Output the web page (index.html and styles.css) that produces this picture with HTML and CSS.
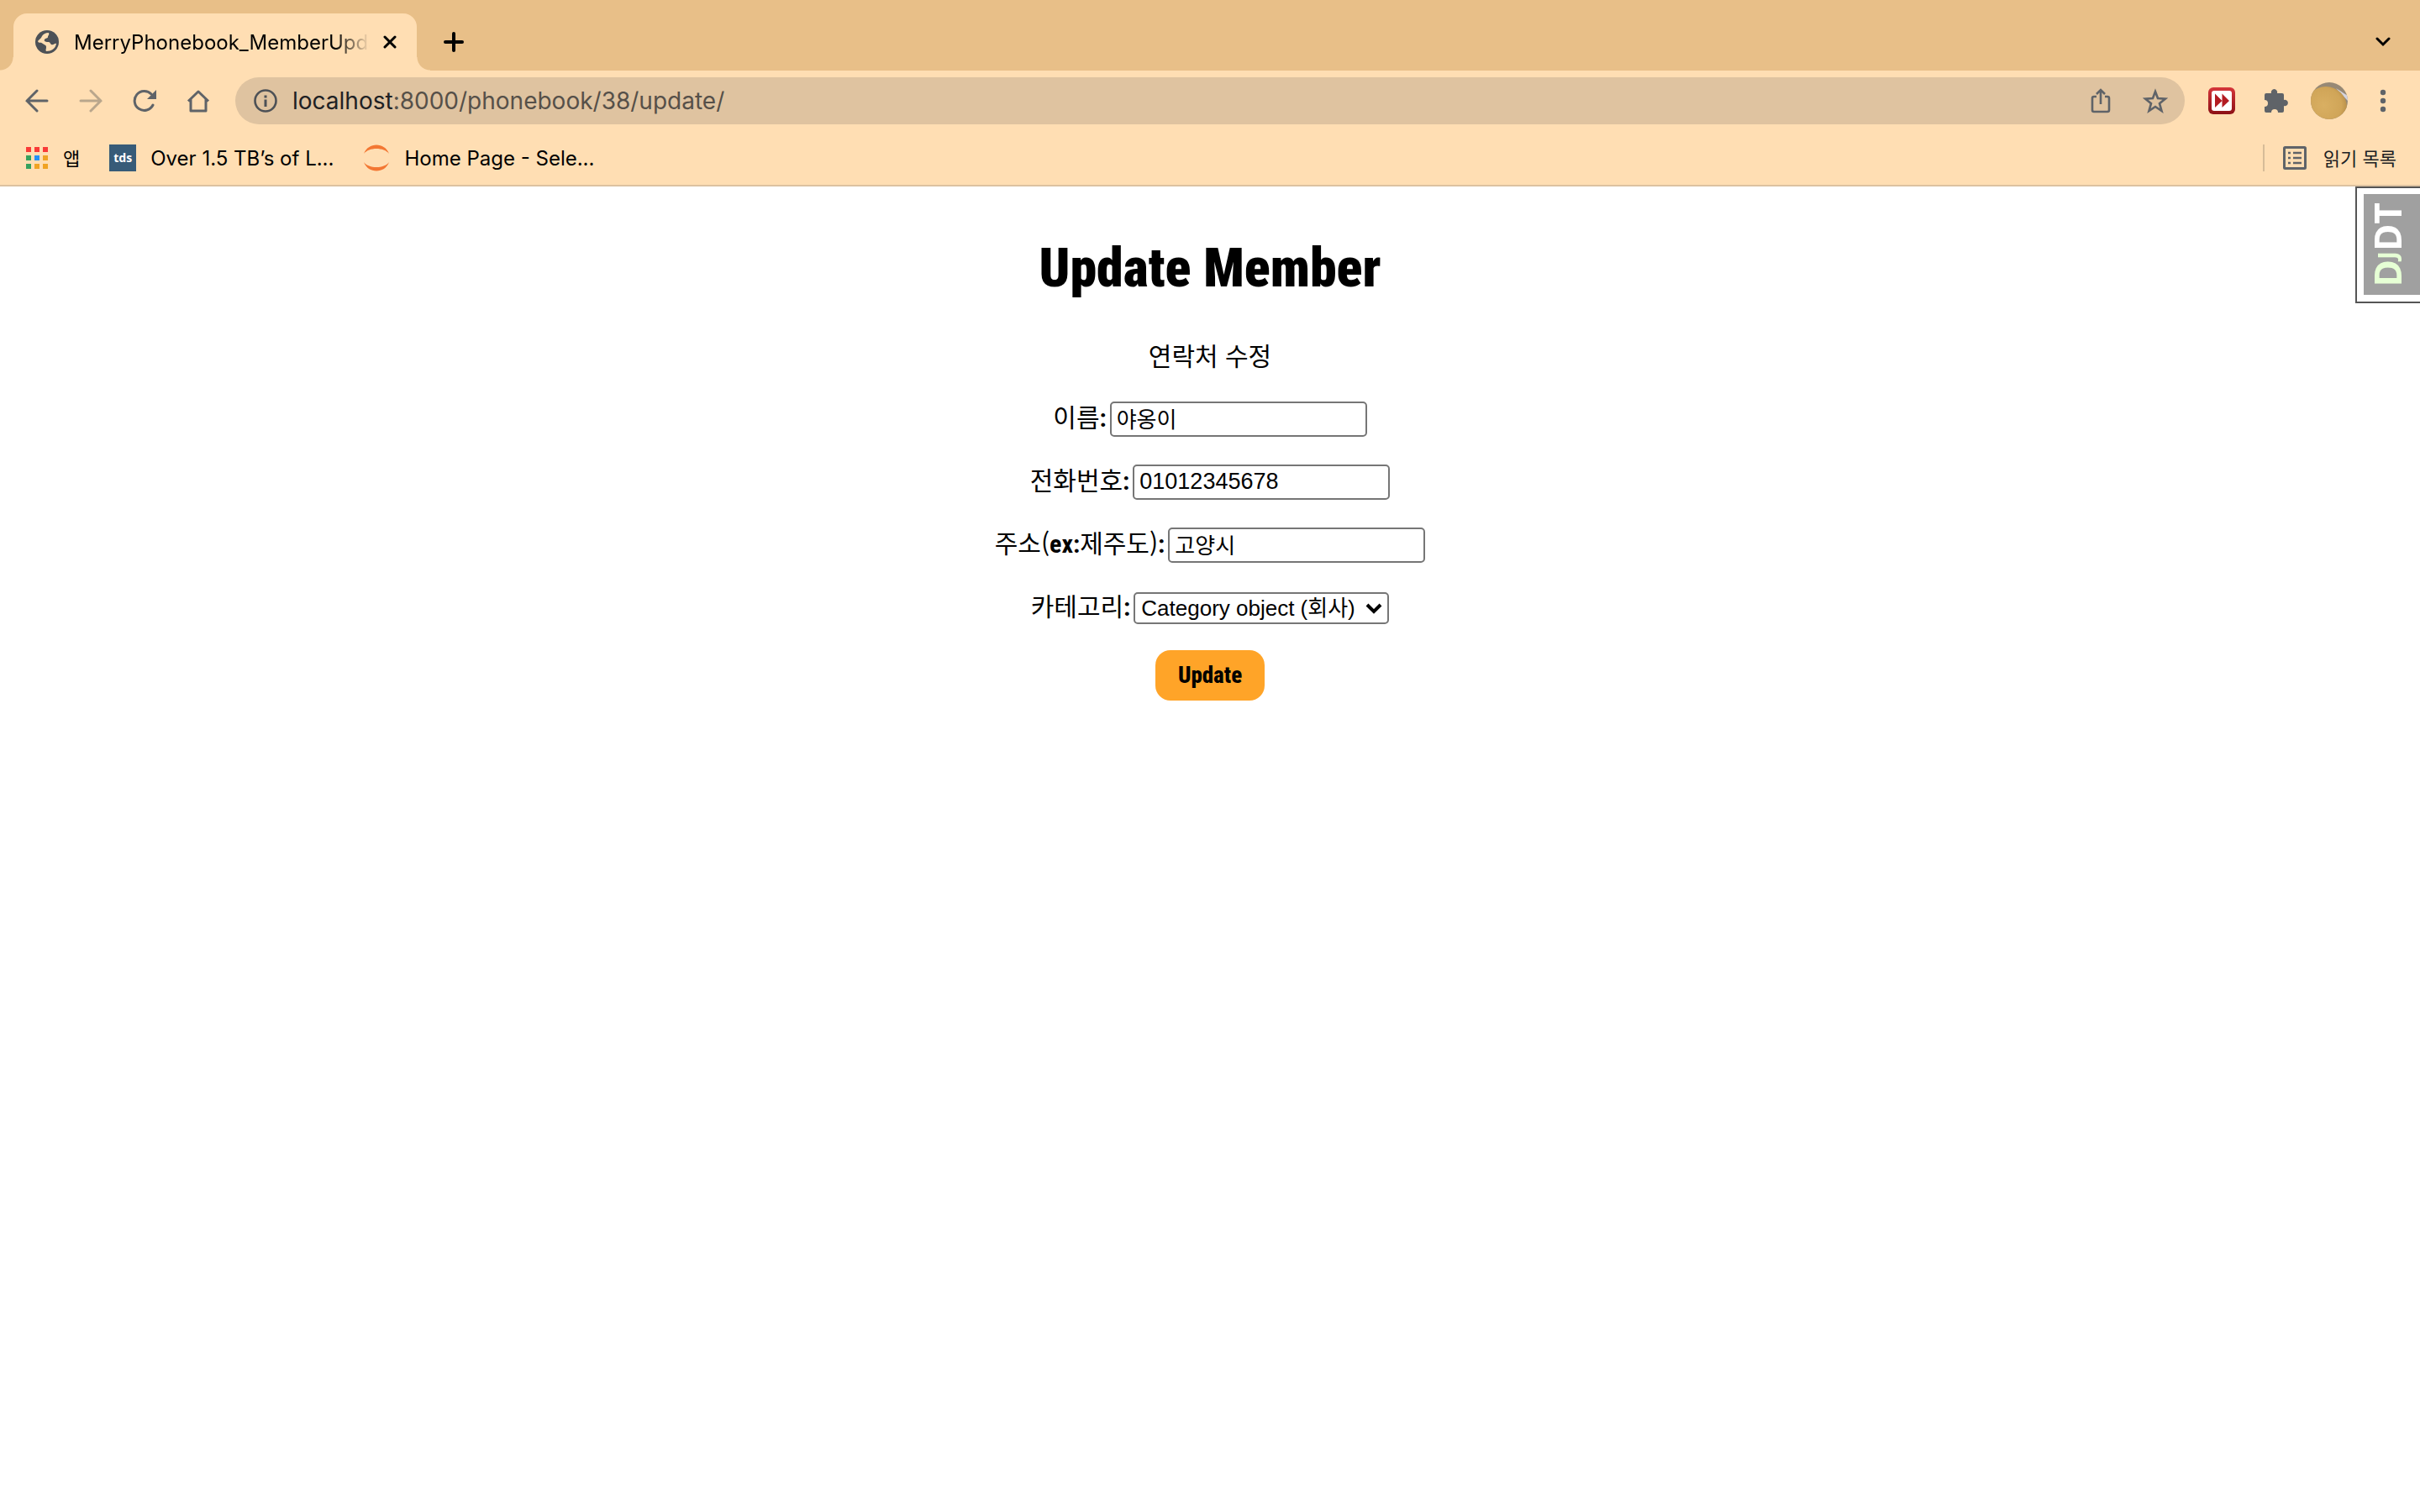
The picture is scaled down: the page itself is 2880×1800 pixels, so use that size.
FILE: index.html
```html
<!DOCTYPE html>
<html lang="ko">
<head>
<meta charset="utf-8">
<title>MerryPhonebook_MemberUpdate</title>
<link rel="stylesheet" href="styles.css">
</head>
<body>
<header class="browser">
  <div class="tabstrip">
    <div class="tab">
      <svg class="favicon" viewBox="0 0 28 28"><circle cx="14" cy="14" r="14" fill="#4d5156"/><path d="M16 3c-4 0-7 2-8 4-1 3-4 4-5 6 1 3 4 1 6 3s4 1 4 4-1 3 0 5c6 0 11-3 12-9-2-1-3 2-6 1-2-2-1-3-4-3s-5-1-4-3 4-1 4-3 2-2 1-5z" fill="#ffdeb3"/></svg>
      <span class="tab-title">MerryPhonebook_MemberUpda</span>
      <button class="icon-button tab-close" aria-label="Close tab"><svg width="16" height="18" viewBox="0 0 16 18"><path d="M2 3l12 12M14 3L2 15" stroke="#000" stroke-width="3" stroke-linecap="round"/></svg></button>
    </div>
    <button class="icon-button new-tab" aria-label="New tab"><svg width="24" height="24" viewBox="0 0 24 24"><path d="M12 2v20M2 12h20" stroke="#000" stroke-width="4" stroke-linecap="round"/></svg></button>
    <button class="icon-button tab-search" aria-label="Search tabs"><svg width="18" height="12" viewBox="0 0 18 12"><path d="M2 2l7 7 7-7" fill="none" stroke="#000" stroke-width="3" stroke-linecap="round"/></svg></button>
  </div>
  <div class="toolbar">
    <nav class="nav-buttons">
      <button class="icon-button" aria-label="Back"><svg width="28" height="28" viewBox="0 0 28 28"><path d="M14 2L2 14l12 12M2 14h24" fill="none" stroke="#5f6368" stroke-width="3" stroke-linecap="round"/></svg></button>
      <button class="icon-button" aria-label="Forward"><svg width="28" height="28" viewBox="0 0 28 28"><path d="M14 2l12 12-12 12M26 14H2" fill="none" stroke="#b9a68c" stroke-width="3" stroke-linecap="round"/></svg></button>
      <button class="icon-button" aria-label="Reload"><svg width="28" height="28" viewBox="0 0 28 28"><path d="M24 19A11.500 11.500 0 1 1 22 6" fill="none" stroke="#5f6368" stroke-width="3" stroke-linecap="round"/><path d="M28 1v11H17z" fill="#5f6368"/></svg></button>
      <button class="icon-button" aria-label="Home"><svg width="28" height="28" viewBox="0 0 28 28"><path d="M2 14.500L14 3l12 11.500M5 12v14h18V12" fill="none" stroke="#5f6368" stroke-width="3" stroke-linejoin="round"/></svg></button>
    </nav>
    <div class="omnibox">
      <svg width="28" height="28" viewBox="0 0 28 28"><circle cx="14" cy="14" r="12.500" fill="none" stroke="#4d5156" stroke-width="2.600"/><path d="M14 12.500V21M14 7.500v3" stroke="#4d5156" stroke-width="3"/></svg>
      <span class="url"><span class="host">localhost</span>:8000/phonebook/38/update/</span>
      <button class="icon-button share" aria-label="Share"><svg width="24" height="30" viewBox="0 0 24 30"><path d="M7 10H4q-2 0-2 2v14q0 2 2 2h16q2 0 2-2V12q0-2-2-2h-3M12 19V2M7 7l5-5 5 5" fill="none" stroke="#5f6368" stroke-width="2.600"/></svg></button>
      <button class="icon-button" aria-label="Bookmark"><svg width="30" height="30" viewBox="0 0 30 30"><path d="M15 4l3 8 9 .6-7 5.600 2.500 8.800-7.500-5-7.500 5 2.500-8.800-7-5.600 9-.6z" fill="none" stroke="#5f6368" stroke-width="2.600"/></svg></button>
    </div>
    <div class="actions">
      <button class="icon-button" aria-label="Skip"><svg width="32" height="32" viewBox="0 0 32 32"><defs><linearGradient id="red" x1="0" y1="0" x2="0" y2="1"><stop stop-color="#d5363a"/><stop offset="1" stop-color="#8c1015"/></linearGradient></defs><rect width="32" height="32" rx="6" fill="url(#red)"/><rect x="4" y="4" width="24" height="24" rx="3" fill="#fff"/><path d="M8 7.500l8.500 8.500L8 24zM16.500 7.500L25 16l-8.500 8z" fill="#b31c22"/></svg></button>
      <button class="icon-button" aria-label="Extensions"><svg width="30" height="30" viewBox="0 0 30 30"><path d="M3 6h6a3.700 3.700 0 1 1 7 0h6q2 0 2 2v6a3.700 3.700 0 1 1 0 7v6q0 2-2 2h-5a4 4 0 0 0-8 0H3q-2 0-2-2v-5a4 4 0 0 0 0-8V8q0-2 2-2z" fill="#5f6368"/></svg></button>
      <button class="icon-button" aria-label="Profile"><svg width="44" height="44" viewBox="0 0 44 44"><defs><clipPath id="round"><circle cx="22" cy="22" r="22"/></clipPath><radialGradient id="bun" cx=".45" cy=".45" r=".6"><stop stop-color="#d9af62"/><stop offset=".7" stop-color="#d0a558"/><stop offset="1" stop-color="#b38a45"/></radialGradient></defs><g clip-path="url(#round)"><path d="M0 0h44v44H0z" fill="#978975"/><path d="M30 7l14 9v6z" fill="#d5d3dc"/><ellipse cx="18" cy="30" rx="25" ry="25" fill="url(#bun)"/></g></svg></button>
      <button class="icon-button menu" aria-label="Menu"><svg width="8" height="28" viewBox="0 0 8 28"><g fill="#5f6368"><circle cx="4" cy="4" r="3.200"/><circle cx="4" cy="14" r="3.200"/><circle cx="4" cy="24" r="3.200"/></g></svg></button>
    </div>
  </div>
  <nav class="bookmarks">
    <a class="bookmark korean" href="#"><svg width="26" height="26" viewBox="0 0 26 26"><path d="M0 0h6v6H0zM10 0h6v6h-6zM20 0h6v6h-6z" fill="#f93a37"/><path d="M0 10h6v6H0zM0 20h6v6H0z" fill="#36a15d"/><path d="M10 10h6v6h-6z" fill="#2490f5"/><path d="M20 10h6v6h-6zM10 20h6v6h-6zM20 20h6v6h-6z" fill="#f0a324"/></svg><span>앱</span></a>
    <a class="bookmark" href="#"><span class="tds">tds</span><span>Over 1.5 TB’s of L...</span></a>
    <a class="bookmark" href="#"><svg width="32" height="32" viewBox="0 0 32 32"><path d="M1 11C6-3 26-3 31 11 25 3 7 3 1 11zM1 21c5 14 25 14 30 0-6 8-24 8-30 0z" fill="#f37733"/></svg><span>Home Page - Sele...</span></a>
    <a class="bookmark korean reading-list" href="#"><svg width="28" height="28" viewBox="0 0 28 28"><rect x="1.500" y="1.500" width="25" height="25" rx="1" fill="none" stroke="#5f6368" stroke-width="3"/><path d="M6 8h3M6 14h3M6 20h3M12 8h10M12 14h10M12 20h10" stroke="#5f6368" stroke-width="2.600"/></svg><span>읽기 목록</span></a>
  </nav>
</header>
<main class="page">
  <aside class="debug"><a class="debug-link" href="#"><span class="debug-text"><span class="dj">D<small>J</small></span>DT</span></a></aside>
  <h1>Update Member</h1>
  <p class="intro">연락처 수정</p>
  <form class="member-form">
    <div class="row"><label for="name">이름<b>:</b></label><input class="field" id="name" type="text" value="야옹이"></div>
    <div class="row"><label for="phone">전화번호<b>:</b></label><input class="field latin" id="phone" type="text" value="01012345678"></div>
    <div class="row"><label for="address">주소(<b>ex:</b>제주도)<b>:</b></label><input class="field" id="address" type="text" value="고양시"></div>
    <div class="row"><label for="category">카테고리<b>:</b></label><span class="select-wrap"><select id="category"><option>Category object (회사)</option></select><svg class="chevron" width="20" height="14" viewBox="0 0 20 14"><path d="M2 3l8 8 8-8" fill="none" stroke="#000" stroke-width="4"/></svg></span></div>
    <button class="submit" type="button">Update</button>
  </form>
</main>
</body>
</html>
```
FILE: styles.css
```css
* { box-sizing: border-box; }

body {
  margin: 0;
  background: #fff;
  color: #000;
  font-family: "Inter", "Noto Sans CJK KR", sans-serif;
}

svg { display: block; flex: none; }

.icon-button {
  display: block;
  padding: 0;
  border: 0;
  background: none;
}

.browser {
  background: #ffdeb3;
  border-bottom: 2px solid #dcc2a0;
}

.tabstrip {
  display: flex;
  align-items: center;
  height: 84px;
  padding: 16px 35px 0 16px;
  background: #e8bf88;
}

.tab {
  position: relative;
  display: flex;
  align-items: center;
  width: 480px;
  height: 68px;
  padding: 0 24px 0 26px;
  border-radius: 16px 16px 0 0;
  background: #ffdeb3;
}

/* flared feet that join the tab to the toolbar */
.tab::before,
.tab::after {
  content: "";
  position: absolute;
  bottom: 0;
  width: 16px;
  height: 16px;
}

.tab::before {
  right: 100%;
  background: radial-gradient(circle at 0 0, #e8bf88 15px, #ffdeb3 16px);
}

.tab::after {
  left: 100%;
  background: radial-gradient(circle at 100% 0, #e8bf88 15px, #ffdeb3 16px);
}

.favicon { width: 28px; height: 28px; }

.tab-title {
  flex: 1;
  margin: 0 16px 0 18px;
  overflow: hidden;
  white-space: nowrap;
  font-size: 24px;
  -webkit-mask-image: linear-gradient(to right, #000 88%, transparent);
  mask-image: linear-gradient(to right, #000 88%, transparent);
}

.new-tab { margin-left: 32px; }
.tab-search { margin-left: auto; }

.toolbar {
  display: flex;
  align-items: center;
  height: 72px;
  padding: 0 40px 0 30px;
}

.nav-buttons {
  display: flex;
  gap: 36px;
  margin-right: 30px;
}

.omnibox {
  flex: 1;
  display: flex;
  align-items: center;
  height: 56px;
  padding: 0 20px 0 22px;
  border-radius: 28px;
  background: #dfc3a0;
}

.url {
  flex: 1;
  margin-left: 18px;
  color: #565049;
  font-size: 28px;
}

.host { color: #202124; }
.share { margin-right: 38px; }

.actions {
  display: flex;
  align-items: center;
  margin-left: 28px;
}

.actions .icon-button + .icon-button { margin-left: 34px; }
.actions .icon-button:nth-child(3) { margin-left: 26px; }
.actions .icon-button.menu { margin-left: 38px; }

.bookmarks {
  display: flex;
  align-items: center;
  height: 64px;
  padding: 0 28px 0 31px;
}

.bookmark {
  display: flex;
  align-items: center;
  gap: 17px;
  margin-right: 35px;
  color: #000;
  font-size: 24px;
  text-decoration: none;
}

.korean {
  gap: 18px;
  font-size: 22px;
}

.korean span { padding-bottom: 3px; }

.tds {
  width: 32px;
  height: 32px;
  background: #375b78;
  color: #fff;
  font: bold 14px/32px "Noto Sans", sans-serif;
  text-align: center;
}

.reading-list {
  gap: 20px;
  height: 32px;
  margin: 0 0 0 auto;
  padding-left: 22px;
  border-left: 2px solid #d6bc98;
  color: #202124;
}

.page {
  position: relative;
  display: flex;
  flex-direction: column;
  align-items: center;
  padding-top: 60px;
  font-family: "Noto Sans CJK KR", sans-serif;
}

h1 {
  margin: 0;
  font-family: "Roboto Condensed", "Lato", sans-serif;
  font-size: 64px;
  font-weight: 900;
  line-height: 76px;
}

.intro {
  margin: 44px 0 36px;
  font-size: 30px;
  line-height: 40px;
}

.member-form {
  display: flex;
  flex-direction: column;
  align-items: center;
  gap: 33px;
}

.row {
  display: flex;
  align-items: center;
  gap: 4px;
  height: 42px;
}

label {
  align-self: flex-start;
  font-size: 30px;
  line-height: 34px;
}

label b {
  font-family: "Roboto Condensed", "Lato", sans-serif;
  line-height: 1;
}

.field,
select {
  border: 2px solid #767676;
  border-radius: 5px;
  background: #fff;
  color: #000;
  font: 26px "Liberation Sans", "Noto Sans CJK KR", sans-serif;
}

.field {
  width: 306px;
  height: 42px;
  padding: 0 6px 4px;
}

.latin {
  padding-bottom: 2px;
  font-size: 27px;
}

.select-wrap { position: relative; }

select {
  display: block;
  appearance: none;
  width: 304px;
  height: 38px;
  padding: 0 34px 0 7px;
}

.chevron {
  position: absolute;
  top: 12px;
  right: 8px;
  pointer-events: none;
}

.submit {
  width: 130px;
  height: 60px;
  margin-top: -4px;
  border: 0;
  border-radius: 18px;
  background: #ffa428;
  color: #000;
  font: 800 27px "Roboto Condensed", "Lato", sans-serif;
}

.debug {
  position: absolute;
  top: 0;
  right: 0;
  width: 77px;
  height: 139px;
  padding: 7px 0 7px 8px;
  border: 2px solid #555;
  border-right: 0;
}

.debug-link {
  display: flex;
  align-items: center;
  justify-content: center;
  height: 120px;
  padding-right: 12px;
  background: #a0a0a0;
  color: #fff;
  text-decoration: none;
}

.debug-text {
  writing-mode: vertical-rl;
  transform: rotate(180deg);
  font: 700 44px/50px "Open Sans", sans-serif;
}

.dj { color: #e6ffd5; }
.dj small { font-size: 30px; }
```
